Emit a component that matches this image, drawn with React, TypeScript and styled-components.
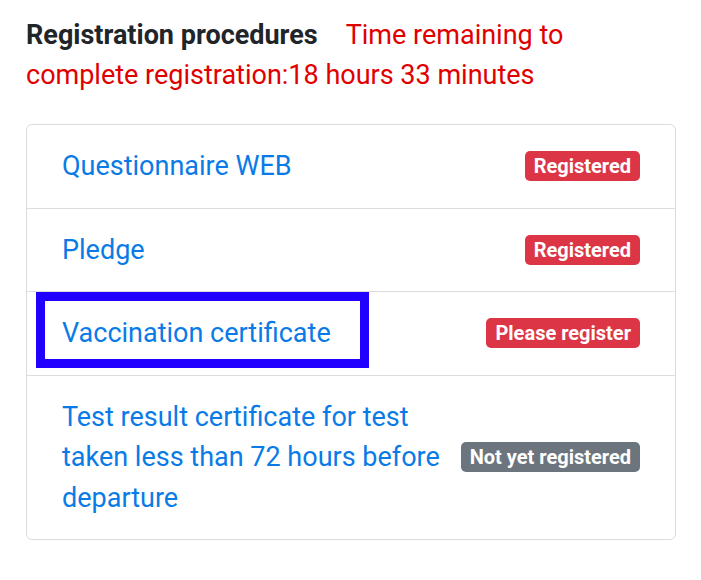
import React from "react";
import styled, { createGlobalStyle } from "styled-components";

const Global = createGlobalStyle`
  html, body { margin: 0; padding: 0; background: #fff; }
  body { font-family: Roboto, "Noto Sans", "Liberation Sans", sans-serif; }
`;

const Page = styled.div`
  padding: 15px 25px 0 26px;
  width: 650px;
`;

const Header = styled.div`
  font-size: 27px;
  line-height: 40px;
  margin-bottom: 29px;
`;

const Title = styled.span`
  font-weight: 700;
  color: #212529;
  margin-right: 28px;
`;

const Remaining = styled.span`
  color: #e00000;
`;

const Card = styled.ul`
  list-style: none;
  margin: 0;
  padding: 0;
  border: 1px solid #dcdcdc;
  border-radius: 6px;
`;

const Row = styled.li<{ $first?: boolean }>`
  position: relative;
  display: flex;
  align-items: center;
  justify-content: space-between;
  padding: 21px 35px 21px 35px;
  min-height: 40px;
  border-top: ${(p) => (p.$first ? "none" : "1px solid #dcdcdc")};
`;

const Link = styled.a`
  flex: 1 1 auto;
  color: #0a7be6;
  font-size: 27px;
  line-height: 40.5px;
  text-decoration: none;
`;

const Badge = styled.span<{ $tone: "danger" | "secondary" }>`
  flex: 0 0 auto;
  display: inline-block;
  background: ${(p) => (p.$tone === "danger" ? "#dc3545" : "#6c757d")};
  color: #fff;
  font-weight: 700;
  font-size: 20px;
  line-height: 22px;
  padding: 4px 9px 4px;
  border-radius: 5px;
  white-space: nowrap;
`;

const Highlight = styled.div`
  position: absolute;
  left: 9px;
  top: 0;
  width: 333px;
  height: 76px;
  box-sizing: border-box;
  border: 9px solid #2200ff;
  pointer-events: none;
`;

const items: { label: string; status: string; tone: "danger" | "secondary"; mark?: boolean }[] = [
  { label: "Questionnaire WEB", status: "Registered", tone: "danger" },
  { label: "Pledge", status: "Registered", tone: "danger" },
  { label: "Vaccination certificate", status: "Please register", tone: "danger", mark: true },
  {
    label: "Test result certificate for test taken less than 72 hours before departure",
    status: "Not yet registered",
    tone: "secondary",
  },
];

export default function App() {
  return (
    <>
      <Global />
      <Page>
        <Header>
          <Title>Registration procedures</Title>
          <Remaining>Time remaining to complete registration:18 hours 33 minutes</Remaining>
        </Header>
        <Card>
          {items.map((it, i) => (
            <Row key={it.label} $first={i === 0}>
              {it.mark && <Highlight />}
              <Link href="#">{it.label}</Link>
              <Badge $tone={it.tone}>{it.status}</Badge>
            </Row>
          ))}
        </Card>
      </Page>
    </>
  );
}
